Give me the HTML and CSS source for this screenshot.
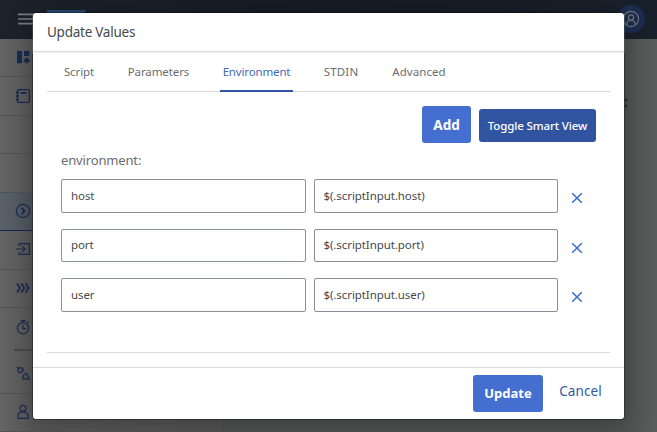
FILE: index.html
```html
<!DOCTYPE html>
<html lang="en">
<head>
<meta charset="utf-8">
<title>Update Values</title>
<link rel="stylesheet" href="styles.css">
</head>
<body>
<div class="app">
  <header class="topbar">
    <svg class="menu" width="16" height="14" viewBox="0 0 16 14"><path d="M0 2.4h16M0 7h16M0 11.6h16"/></svg>
    <div class="brand"></div>
    <div class="avatar"><svg width="18" height="18" viewBox="0 0 18 18"><circle cx="9" cy="9" r="7.6"/><circle cx="9" cy="7.5" r="2.6"/><path d="M4.8 15v-1c0-2.3 1.5-3.5 4.2-3.5s4.2 1.2 4.2 3.5v1"/></svg></div>
  </header>
  <div class="main">
    <nav class="side">
      <div class="item"><svg class="ico" viewBox="0 0 16 16"><path class="fill" d="M2 2h5v12.3H2zM9 2h5.3v5H9zM10.3 8.7h2.8v1.5h1.5V13h-1.5v1.3h-2.8V13H8.8v-2.8h1.5z"/></svg></div>
      <div class="item"><svg class="ico" viewBox="0 0 16 16"><rect x="2.6" y="1.6" width="11.8" height="12.8" rx="1.2"/><path class="bold" d="M5.5 5h6"/><path class="bold" d="M1 4.5h2.6M1 8h2.6M1 11.5h2.6"/></svg></div>
      <div class="item"></div>
      <div class="item"></div>
      <div class="item active"><svg class="ico" viewBox="0 0 16 16"><circle cx="8" cy="8" r="6.6"/><path class="bold" d="M6.6 4.9 9.6 8l-3 3.1"/></svg></div>
      <div class="item"><svg class="ico" viewBox="0 0 16 16"><path d="M4.2 5V2.7h10.2v10.6H4.2V11M1 8h9M7 4.8 10.2 8 7 11.2"/></svg></div>
      <div class="item"><svg class="ico" viewBox="0 0 16 16"><path class="bold" d="M2 3.5 5 8l-3 4.5M6.3 3.5l3 4.5-3 4.5M10.6 3.5l3 4.5-3 4.5"/></svg></div>
      <div class="item timer"><svg class="ico" viewBox="0 0 16 16"><circle cx="8" cy="9.2" r="5.6"/><path d="M5.5 1.6h5M8 1.6v2M12 4l1.5-1.4M8 6v3.6h3"/></svg></div>
      <div class="item plug"><svg class="ico" viewBox="0 0 16 16"><path d="M1.8 1.7 4 3.8M3.2 3.6 6.5 2.4 8 5 6.8 7.2 4 7.6 3 6.2zM11.3 8.2l2.5 4.3-1.6 1.4-3.8-.1-.7-1.6 1.4-2.7zM13 13l1.8 1.8M8 4l1 .8"/></svg></div>
      <div class="item"><svg class="ico" viewBox="0 0 16 16"><circle cx="8" cy="4.4" r="3"/><path d="M3 14.4v-2.3c0-2.7 1.6-4.1 5-4.1s5 1.4 5 4.1v2.3z"/></svg></div>
    </nav>
    <main class="content"><span class="colon">:</span></main>
  </div>
</div>

<section class="dialog">
  <header class="head"><h1>Update Values</h1></header>
  <div class="body">
    <nav class="tabs">
      <span class="tab t1">Script</span><span class="tab t2">Parameters</span><span class="tab t3 on">Environment</span><span class="tab t4">STDIN</span><span class="tab t5">Advanced</span>
    </nav>
    <div class="tools"><button class="btn add">Add</button><button class="btn toggle">Toggle Smart View</button></div>
    <div class="label">environment:</div>
    <div class="rows">
      <div class="row"><div class="field">host</div><div class="field value">$(.scriptInput.host)</div><svg class="x" viewBox="0 0 12 12"><path d="m1.2 1.2 9.6 9.6m0-9.6-9.6 9.6"/></svg></div>
      <div class="row"><div class="field">port</div><div class="field value">$(.scriptInput.port)</div><svg class="x" viewBox="0 0 12 12"><path d="m1.2 1.2 9.6 9.6m0-9.6-9.6 9.6"/></svg></div>
      <div class="row"><div class="field">user</div><div class="field value">$(.scriptInput.user)</div><svg class="x" viewBox="0 0 12 12"><path d="m1.2 1.2 9.6 9.6m0-9.6-9.6 9.6"/></svg></div>
    </div>
  </div>
  <footer class="foot"><button class="btn update">Update</button><button class="btn cancel">Cancel</button></footer>
</section>
</body>
</html>
```

FILE: styles.css
```css
* { box-sizing: border-box; }
body { margin: 0; width: 657px; height: 432px; overflow: hidden; position: relative; font-family: "Noto Sans", "Open Sans", sans-serif; background: #585958; }
.app { height: 432px; display: flex; flex-direction: column; }
.topbar { flex: 0 0 39px; display: flex; align-items: flex-start; padding: 0 12px 0 18px; background: linear-gradient(90deg, #1b222c, #151b24 50%, #18202b); }
.menu { margin-top: 12px; flex: none; }
.menu path { stroke: #777b80; stroke-width: 1.6; fill: none; }
.brand { width: 39px; height: 20px; margin: 10px 0 0 13px; background: #29466d; clip-path: polygon(0 0, 100% 0, 60% 100%, 0 100%); }
.avatar { margin: 5px 0 0 auto; width: 28px; height: 28px; border-radius: 50%; background: #1b2c4e; display: grid; place-items: center; }
.avatar svg { fill: none; stroke: #70747a; stroke-width: 1.2; }
.main { flex: 1; display: flex; }
.side { width: 224px; background: linear-gradient(90deg, #646464, #565656 34px, #525252); border-right: 1px solid #4c4c4c; }
.item { height: 38.45px; border-bottom: 1px solid #515151; padding: 0 0 1px 15px; display: flex; align-items: center; }
.active { background: linear-gradient(90deg, #59616a, #4c535a 34px); border-bottom: 1px solid #14264c; }
.timer { height: 43px; padding-bottom: 5px; border-bottom: 0; background: linear-gradient(#484848, #484848) 14px 100% / 100% 2px no-repeat; }
.plug { height: 42.8px; padding-top: 4px; }
.ico { width: 16px; height: 16px; fill: none; stroke: #182a50; stroke-width: 1.2; }
.ico .fill { fill: #182a50; stroke: none; }
.ico .bold { stroke-width: 1.8; }
.content { flex: 1; background: linear-gradient(90deg, #4f5150 400px, #5b5d5c); }
.colon { display: block; margin: 52px 0 0 400px; font: bold 15px/20px "Noto Sans", sans-serif; color: #252a30; }
.dialog { position: absolute; left: 33px; top: 13px; width: 591px; height: 406px; display: flex; flex-direction: column; background: #fff; border-radius: 3px; box-shadow: 0 0 0 1px rgba(0,0,0,.3), 0 4px 24px rgba(0,0,0,.25); }
.head { height: 39px; flex: none; border-bottom: 1px solid #d9d9d9; padding-left: 14px; box-shadow: 0 1px 1px #f3f3f3; }
h1 { margin: 0; font-size: 13.5px; font-weight: 400; line-height: 39px; color: #45494d; letter-spacing: -.25px; }
.body { height: 301px; flex: none; margin: 0 14px; border-bottom: 1px solid #d9d9d9; }
.tabs { height: 40px; display: flex; border-bottom: 1px solid #d9d9d9; padding-left: 9px; }
.tab { height: 40px; line-height: 40px; font-size: 11.5px; letter-spacing: -.1px; color: #6a6d70; text-align: center; white-space: nowrap; }
.t1 { width: 46px; }
.t2 { width: 75px; margin-left: 19px; }
.t3 { width: 73px; margin-left: 24px; letter-spacing: -.15px; }
.t4 { width: 45px; margin-left: 25.5px; letter-spacing: .2px; }
.t5 { width: 64px; margin-left: 23.5px; letter-spacing: .05px; }
.on { color: #3f69b8; border-bottom: 2px solid #3154a0; }
.btn { border: 0; padding: 0; border-radius: 3px; font-family: inherit; color: #fff; background: #446fd0; white-space: nowrap; }
.tools { display: flex; justify-content: flex-end; align-items: flex-start; gap: 8px; padding: 14px 14px 0 0; height: 58px; }
.add { width: 49px; height: 37px; font-size: 13.5px; font-weight: 700; }
.toggle { width: 117px; height: 33px; margin-top: 3px; background: #3154a0; font-size: 11.5px; font-weight: 500; letter-spacing: -.13px; }
.label { padding-left: 14px; font-size: 13px; letter-spacing: -.15px; line-height: 20px; height: 29px; color: #6a6d70; }
.rows { display: grid; grid-template-rows: 34px 33px 34px; row-gap: 16px; padding-left: 14px; }
.row { display: flex; align-items: center; }
.field { width: 245px; height: 100%; border: 1px solid #89919a; border-radius: 2px; padding: 0 9px 2px; display: flex; align-items: center; font-size: 11.5px; letter-spacing: -.08px; color: #45494d; }
.value { width: 244px; margin-left: 8px; padding-left: 8.5px; border-color: #8b8b99; }
.x { width: 12px; height: 12px; margin: 4px 0 0 13px; fill: none; stroke: #3f6fd0; stroke-width: 1.6; }
.foot { margin-top: 14px; height: 52px; border-top: 1px solid #d9d9d9; display: flex; justify-content: flex-end; align-items: flex-start; padding: 7px 16px 0 0; }
.update { width: 70px; height: 37px; padding-bottom: 1px; font-size: 13px; font-weight: 700; }
.cancel { width: 55px; height: 32px; margin-left: 10px; background: none; color: #3159a3; font-size: 13.5px; letter-spacing: .1px; }
```
